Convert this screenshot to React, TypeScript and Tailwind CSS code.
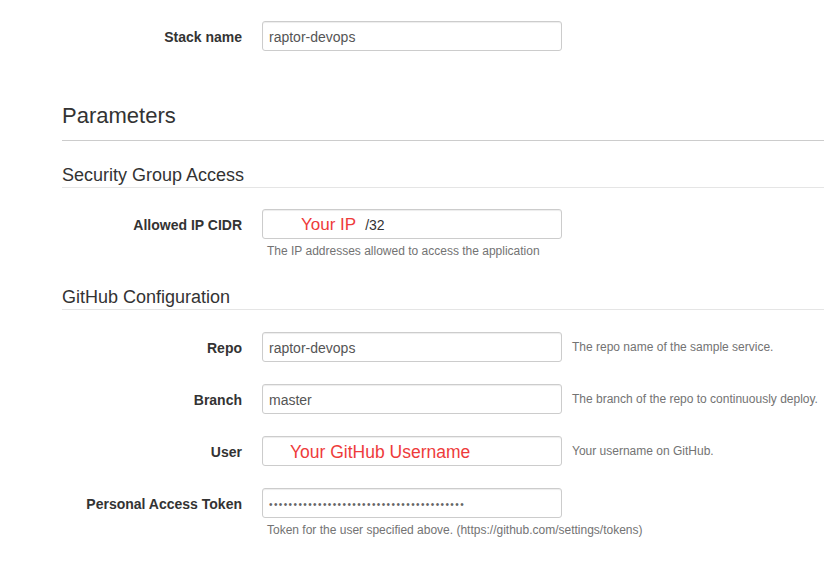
import React from "react";

const font = { fontFamily: '"Liberation Sans", Arial, sans-serif' };

function Field({
  label,
  children,
  side,
  below,
}: {
  label: string;
  children: React.ReactNode;
  side?: string;
  below?: string;
}) {
  return (
    <div className="flex items-start">
      <div className="flex h-[30px] w-[180px] shrink-0 items-center justify-end pt-[3px] text-[14px] font-bold text-[#333]">
        {label}
      </div>
      <div className="ml-[20px] w-[300px] shrink-0">
        <div className="flex h-[30px] w-full items-center rounded-[3px] border border-[#ccc] bg-white pl-[6px] pt-[2px] text-[14px] text-[#555] shadow-[inset_0_1px_1px_rgba(0,0,0,0.075)]">
          {children}
        </div>
        {below && (
          <p className="mt-[4px] pl-[5px] text-[12px] leading-[17px] whitespace-nowrap text-[#737373]">
            {below}
          </p>
        )}
      </div>
      {side && (
        <div className="ml-[10px] flex h-[30px] items-center whitespace-nowrap text-[12px] text-[#737373]">
          {side}
        </div>
      )}
    </div>
  );
}

function SubHeading({ children }: { children: React.ReactNode }) {
  return (
    <h3 className="border-b border-[#e5e5e5] pb-[2px] text-[18px] leading-[20px] text-[#333]">
      {children}
    </h3>
  );
}

export default function App() {
  return (
    <div style={font} className="h-[567px] w-[824px] overflow-hidden bg-white pl-[62px] pt-[21px]">
      <Field label="Stack name">raptor-devops</Field>

      <h2 className="mt-[52px] border-b border-[#ccc] pb-[11px] text-[22px] leading-[26px] text-[#333]">
        Parameters
      </h2>

      <div className="mt-[24px]">
        <SubHeading>Security Group Access</SubHeading>
      </div>
      <div className="mt-[21px]">
        <Field label="Allowed IP CIDR" below="The IP addresses allowed to access the application">
          <span className="ml-[32px] text-[17px] text-[#ee3b3b]">Your IP</span>
          <span className="ml-[9px] text-[14px] text-[#333]">/32</span>
        </Field>
      </div>

      <div className="mt-[27px]">
        <SubHeading>GitHub Configuration</SubHeading>
      </div>
      <div className="mt-[22px] flex flex-col gap-[22px]">
        <Field label="Repo" side="The repo name of the sample service.">
          raptor-devops
        </Field>
        <Field label="Branch" side="The branch of the repo to continuously deploy.">
          master
        </Field>
        <Field label="User" side="Your username on GitHub.">
          <span className="ml-[21px] text-[17.5px] text-[#ee3b3b]">Your GitHub Username</span>
        </Field>
        <Field
          label="Personal Access Token"
          below="Token for the user specified above. (https://github.com/settings/tokens)"
        >
          <span className="text-[10px] tracking-[1.4px] text-[#666]">
            {"•".repeat(40)}
          </span>
        </Field>
      </div>
    </div>
  );
}
